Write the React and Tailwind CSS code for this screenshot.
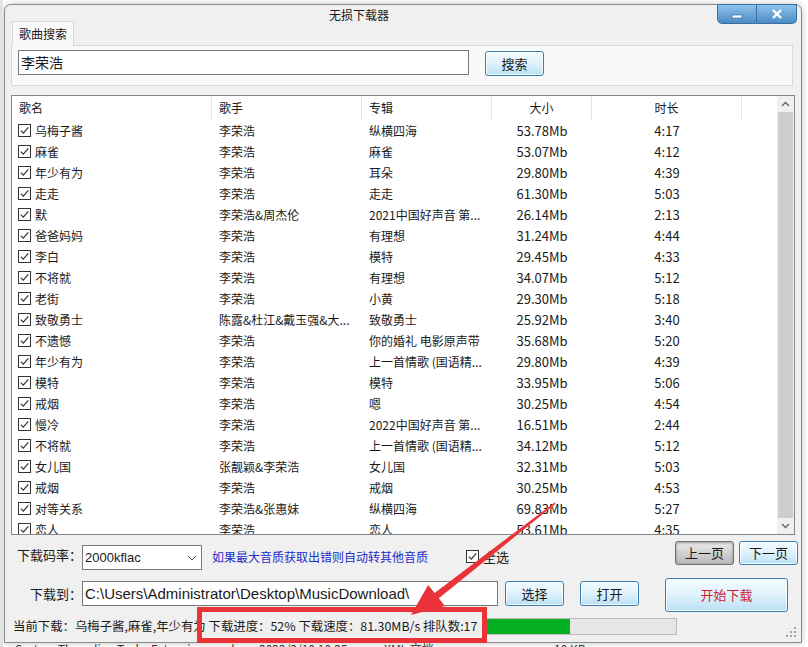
import React from "react";

const rows = [
  ["乌梅子酱", "李荣浩", "纵横四海", "53.78Mb", "4:17"],
  ["麻雀", "李荣浩", "麻雀", "53.07Mb", "4:12"],
  ["年少有为", "李荣浩", "耳朵", "29.80Mb", "4:39"],
  ["走走", "李荣浩", "走走", "61.30Mb", "5:03"],
  ["默", "李荣浩&周杰伦", "2021中国好声音 第...", "26.14Mb", "2:13"],
  ["爸爸妈妈", "李荣浩", "有理想", "31.24Mb", "4:44"],
  ["李白", "李荣浩", "模特", "29.45Mb", "4:33"],
  ["不将就", "李荣浩", "有理想", "34.07Mb", "5:12"],
  ["老街", "李荣浩", "小黄", "29.30Mb", "5:18"],
  ["致敬勇士", "陈露&杜江&戴玉强&大...", "致敬勇士", "25.92Mb", "3:40"],
  ["不遗憾", "李荣浩", "你的婚礼 电影原声带", "35.68Mb", "5:20"],
  ["年少有为", "李荣浩", "上一首情歌 (国语精...", "29.80Mb", "4:39"],
  ["模特", "李荣浩", "模特", "33.95Mb", "5:06"],
  ["戒烟", "李荣浩", "嗯", "30.25Mb", "4:54"],
  ["慢冷", "李荣浩", "2022中国好声音 第...", "16.51Mb", "2:44"],
  ["不将就", "李荣浩", "上一首情歌 (国语精...", "34.12Mb", "5:12"],
  ["女儿国", "张靓颖&李荣浩", "女儿国", "32.31Mb", "5:03"],
  ["戒烟", "李荣浩", "戒烟", "30.25Mb", "4:53"],
  ["对等关系", "李荣浩&张惠妹", "纵横四海", "69.83Mb", "5:27"],
  ["恋人", "李荣浩", "恋人", "53.61Mb", "4:35"],
];

function Check() {
  return (
    <span className="w-[13px] h-[13px] border border-[#333] bg-white flex items-center justify-center shrink-0">
      <svg width="11" height="11" viewBox="0 0 11 11">
        <path d="M1.8 5.6 L4.3 8.1 L9.3 2.4" fill="none" stroke="#333" strokeWidth="1.2" />
      </svg>
    </span>
  );
}

function BlueBtn({ children, className }) {
  return (
    <button
      className={
        "border border-[#3c7fb1] rounded-[3px] bg-linear-to-b from-[#f3fbff] via-[#dff2fc] to-[#b9e0f5] shadow-[inset_0_0_0_1px_rgba(255,255,255,0.8)] text-[13px] flex items-center justify-center " +
        className
      }
    >
      {children}
    </button>
  );
}

export default function App() {
  return (
    <div className="w-[808px] h-[647px] overflow-hidden bg-white relative font-['Noto_Sans_CJK_SC',sans-serif] text-[#1a1a1a] border-l-[3px] border-[#e3e3e3]">
      <div className="mt-[4px] ml-[1px] w-[798px] h-[639px] border border-[#8c8c8c] rounded-t-[7px] bg-[#f0f0f0] shadow-[0_0_6px_rgba(0,0,0,0.25)] flex flex-col">
        {/* title bar */}
        <div className="h-[16px] flex items-start shrink-0">
          <span className="ml-[324px] mt-[2px] text-[12px] leading-[16px]">无损下载器</span>
          <div className="ml-auto mr-[4px] -mt-[1px] h-[20px] flex">
            <div className="w-[40px] h-[20px] border border-[#3a6e9c] rounded-bl-[5px] bg-linear-to-b from-[#8fc3ec] to-[#4b8bc6] flex items-center justify-center">
              <svg width="12" height="10" viewBox="0 0 12 10">
                <rect x="1" y="6" width="10" height="3" fill="#fff" stroke="#2d5f8c" strokeWidth="0.6" />
              </svg>
            </div>
            <div className="w-[40px] h-[20px] border border-l-0 border-[#3a6e9c] rounded-br-[5px] bg-linear-to-b from-[#8fc3ec] to-[#4b8bc6] flex items-center justify-center">
              <svg width="12" height="10" viewBox="0 0 12 10">
                <path d="M2 1 L10 9 M10 1 L2 9" stroke="#fff" strokeWidth="2.4" />
              </svg>
            </div>
          </div>
        </div>

        {/* tab */}
        <div className="h-[24px] flex shrink-0">
          <div className="ml-[7px] w-[62px] h-[25px] border border-b-0 border-[#d9d9d9] bg-[#f9f9f9] relative z-10 text-[12px] flex items-center justify-center">
            歌曲搜索
          </div>
        </div>
        <div className="ml-[6px] w-[782px] h-[41px] border border-[#d9d9d9] bg-[#f9f9f9] flex items-start shrink-0">
          <div className="ml-[6px] mt-[4px] w-[451px] h-[25px] border border-[#7a7a7a] bg-white text-[14px] leading-[23px] pl-[2px]">
            李荣浩
          </div>
          <BlueBtn className="ml-[16px] mt-[5px] w-[59px] h-[25px]">搜索</BlueBtn>
        </div>

        {/* list */}
        <div className="mt-[9px] ml-[6px] w-[784px] h-[440px] border border-[#828790] bg-white flex shrink-0">
          <div className="flex-1 flex flex-col overflow-hidden text-[12px]">
            <div className="h-[24px] flex shrink-0">
              <div className="w-[200px] border-r border-[#e5e5e5] pl-[7px] flex items-center">歌名</div>
              <div className="w-[150px] border-r border-[#e5e5e5] pl-[7px] flex items-center">歌手</div>
              <div className="w-[130px] border-r border-[#e5e5e5] pl-[7px] flex items-center">专辑</div>
              <div className="w-[100px] border-r border-[#e5e5e5] flex items-center justify-center">大小</div>
              <div className="w-[150px] border-r border-[#e5e5e5] flex items-center justify-center">时长</div>
            </div>
            {rows.map((r, i) => (
              <div key={i} className="h-[21px] flex items-center shrink-0 whitespace-nowrap">
                <div className="w-[200px] pl-[6px] flex items-center gap-[4px]">
                  <Check />
                  <span>{r[0]}</span>
                </div>
                <div className="w-[150px] pl-[7px]">{r[1]}</div>
                <div className="w-[130px] pl-[7px]">{r[2]}</div>
                <div className="w-[100px] text-center text-[13px]">{r[3]}</div>
                <div className="w-[150px] text-center text-[13px]">{r[4]}</div>
              </div>
            ))}
          </div>
          <div className="w-[17px] bg-[#f0f0f0] flex flex-col">
            <div className="h-[16px] flex items-center justify-center">
              <svg width="9" height="6" viewBox="0 0 9 6">
                <path d="M1 5 L4.5 1.5 L8 5" fill="none" stroke="#606060" strokeWidth="1.3" />
              </svg>
            </div>
            <div className="flex-1 mx-[1px] bg-[#cdcdcd]"></div>
            <div className="h-[16px] flex items-center justify-center">
              <svg width="9" height="6" viewBox="0 0 9 6">
                <path d="M1 1 L4.5 4.5 L8 1" fill="none" stroke="#606060" strokeWidth="1.3" />
              </svg>
            </div>
          </div>
        </div>

        {/* row 1 */}
        <div className="mt-[6px] h-[29px] flex items-start shrink-0">
          <div className="ml-[7px] w-[70px] text-[13px] leading-[20px] mt-[4px] whitespace-nowrap flex justify-end">下载码率：</div>
          <div className="mt-[4px] w-[120px] h-[25px] border border-[#7a7a7a] bg-white flex items-center pl-[2px] pr-[4px]">
            <span className="font-['Liberation_Sans',sans-serif] text-[13px]">2000kflac</span>
            <svg className="ml-auto" width="10" height="6" viewBox="0 0 10 6">
              <path d="M1 1 L5 5 L9 1" fill="none" stroke="#555" strokeWidth="1" />
            </svg>
          </div>
          <div className="ml-[10px] w-[254px] mt-[7px] text-[12px] leading-[18px] text-[#1c2dc8] whitespace-nowrap">
            如果最大音质获取出错则自动转其他音质
          </div>
          <div className="mt-[9px] flex items-center gap-[4px] text-[13px] leading-[13px]">
            <Check />
            <span>全选</span>
          </div>
          <div className="ml-auto mr-[3px] flex gap-[5px]">
            <button className="w-[59px] h-[24px] border border-[#707070] rounded-[3px] bg-linear-to-b from-[#ececec] to-[#b8b8b8] shadow-[inset_0_1px_3px_rgba(0,0,0,0.35)] text-[13px] flex items-center justify-center">
              上一页
            </button>
            <BlueBtn className="w-[59px] h-[24px]">下一页</BlueBtn>
          </div>
        </div>

        {/* row 2 */}
        <div className="mt-[8px] h-[34px] flex items-start shrink-0">
          <div className="ml-[7px] w-[70px] text-[13px] leading-[20px] mt-[6px] whitespace-nowrap flex justify-end">下载到：</div>
          <div className="mt-[3px] w-[416px] h-[25px] border border-[#7a7a7a] bg-white pl-[2px] font-['Liberation_Sans',sans-serif] text-[15px] leading-[23px] whitespace-nowrap overflow-hidden">
            C:\Users\Administrator\Desktop\MusicDownload\
          </div>
          <BlueBtn className="ml-[7px] mt-[3px] w-[59px] h-[25px]">选择</BlueBtn>
          <BlueBtn className="ml-[16px] mt-[3px] w-[59px] h-[25px]">打开</BlueBtn>
          <BlueBtn className="ml-[26px] w-[123px] h-[34px] text-[#d0202a]">开始下载</BlueBtn>
        </div>

        {/* status */}
        <div className="mt-[6px] h-[17px] flex items-center shrink-0">
          <div className="ml-[8px] w-[469px] text-[12.4px] whitespace-nowrap leading-[17px] overflow-hidden">
            当前下载：乌梅子酱,麻雀,年少有为 下载进度：52% 下载速度：81.30MB/s 排队数:17
          </div>
          <div className="w-[195px] h-[17px] border border-[#bcbcbc] bg-[#e6e6e6]">
            <div className="h-full bg-[#06b025]" style={{ width: "45%" }}></div>
          </div>
          <svg className="ml-auto mr-[4px] mt-[12px]" width="11" height="11" viewBox="0 0 11 11">
            <g fill="#a0a0a0">
              <rect x="8" y="0" width="2" height="2" />
              <rect x="4" y="4" width="2" height="2" />
              <rect x="8" y="4" width="2" height="2" />
              <rect x="0" y="8" width="2" height="2" />
              <rect x="4" y="8" width="2" height="2" />
              <rect x="8" y="8" width="2" height="2" />
            </g>
          </svg>
        </div>
      </div>

      {/* background explorer text peeking below */}
      <div className="h-[4px] overflow-hidden text-[12px] leading-[12px] text-[#333] flex whitespace-nowrap">
        <span className="ml-[12px] w-[244px]">System.Threading.Tasks.Extensions.xml</span>
        <span className="w-[125px]">2022/3/10 10:25</span>
        <span className="w-[170px]">XML 文档</span>
        <span>10 KB</span>
      </div>

      {/* annotation overlay */}
      <div className="absolute left-[194px] top-[607px] w-[290px] h-[36px] border-[5px] border-[#ea3338]"></div>
      <svg className="absolute left-0 top-0 pointer-events-none" width="808" height="647">
        <polygon
          points="551.6,502.5 552.6,503.8 435.8,598.2 442,606 408,615 425.2,585 431.6,592.9"
          fill="#ea3338"
        />
      </svg>
    </div>
  );
}
